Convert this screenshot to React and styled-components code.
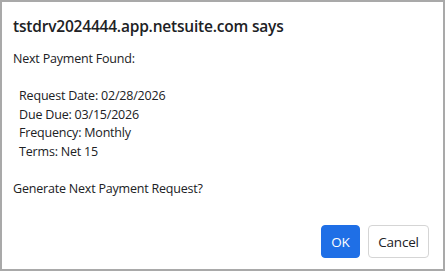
import React from "react";
import styled, { createGlobalStyle } from "styled-components";

const Global = createGlobalStyle`
  html, body { margin: 0; padding: 0; background: #fff; }
  * { box-sizing: border-box; }
`;

const Dialog = styled.div`
  width: 445px;
  height: 271px;
  border: 2px solid #a9a9a9;
  background: #fff;
  display: flex;
  flex-direction: column;
  padding: 14px 14px 11px 11px;
  font-family: "Open Sans", "Noto Sans", sans-serif;
  color: #202124;
`;

const Title = styled.div`
  font-size: 15.5px;
  font-weight: 600;
  line-height: 20px;
  letter-spacing: -0.2px;
  margin-bottom: 14px;
`;

const Message = styled.div`
  font-size: 12.5px;
  line-height: 18.5px;
  white-space: pre-wrap;
  letter-spacing: -0.2px;
  flex: 1;
`;

const Buttons = styled.div`
  display: flex;
  justify-content: flex-end;
  gap: 8px;
`;

const Button = styled.button`
  height: 33px;
  width: ${(p) => (p.$primary ? "39px" : "61px")};
  padding: 0;
  border-radius: 4px;
  font-family: "Open Sans", "Noto Sans", sans-serif;
  font-size: 13.5px;
  letter-spacing: -0.2px;
  border: 1px solid ${(p) => (p.$primary ? "#1f6fe6" : "#d5d5d5")};
  background: ${(p) => (p.$primary ? "#1f6fe6" : "#fff")};
  color: ${(p) => (p.$primary ? "#fff" : "#202124")};
`;

const msg = `Next Payment Found:

  Request Date: 02/28/2026
  Due Due: 03/15/2026
  Frequency: Monthly
  Terms: Net 15

Generate Next Payment Request?`;

export default function App() {
  return (
    <>
      <Global />
      <Dialog>
        <Title>tstdrv2024444.app.netsuite.com says</Title>
        <Message>{msg}</Message>
        <Buttons>
          <Button $primary>OK</Button>
          <Button>Cancel</Button>
        </Buttons>
      </Dialog>
    </>
  );
}
